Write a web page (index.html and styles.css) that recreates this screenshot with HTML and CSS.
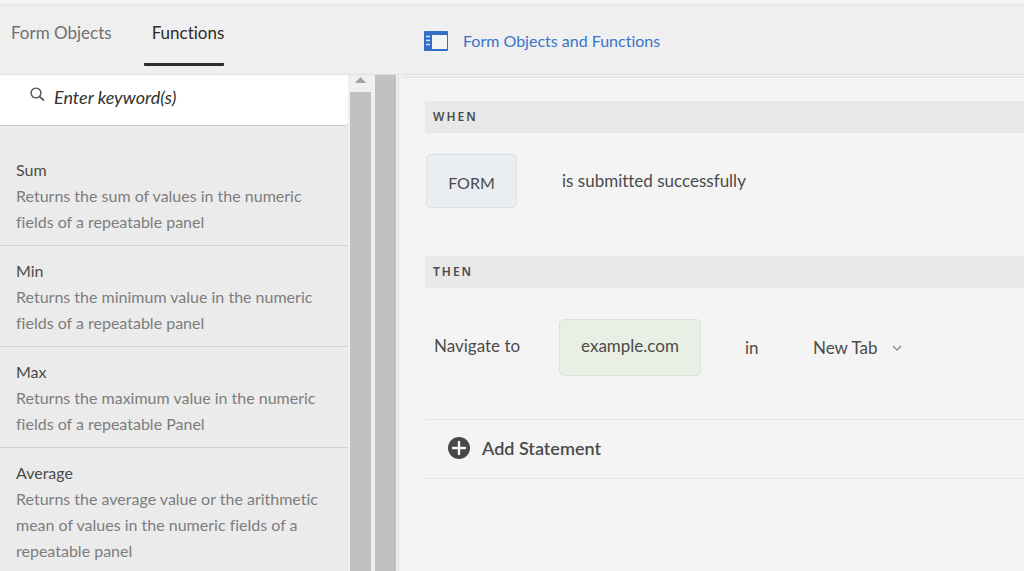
FILE: index.html
```html
<!DOCTYPE html>
<html lang="en">
<head>
<meta charset="utf-8">
<title>Rule Editor</title>
<link rel="stylesheet" href="styles.css">
</head>
<body>
<header class="topbar">
  <nav class="tabs" aria-label="Sidebar sections">
    <button class="tab" type="button">Form Objects</button>
    <button class="tab tab-active" type="button">Functions</button>
  </nav>
  <button class="panel-toggle" type="button">
    <svg width="24" height="20" viewBox="0 0 24 20" aria-hidden="true">
      <rect width="24" height="20" rx="1" fill="#326ec8"/>
      <rect x="8" y="4" width="15" height="14" fill="#f2f3f5"/>
      <path d="M2 5.5h4M2 9.5h4M2 13.5h4" stroke="#dce6f5" stroke-width="1.5"/>
    </svg>
    <span>Form Objects and Functions</span>
  </button>
</header>
<div class="workspace">
  <aside class="sidebar">
    <label class="search">
      <svg width="16" height="16" viewBox="0 0 16 16" fill="none" stroke="#505050" aria-hidden="true">
        <circle cx="6" cy="6" r="4.9" stroke-width="1.4"/>
        <path d="M9.7 9.7l4.3 4" stroke-width="1.7"/>
      </svg>
      <input class="search-input" type="text" placeholder="Enter keyword(s)" aria-label="Enter keyword(s)">
    </label>
    <ul class="functions">
      <li class="function"><h3 class="function-name">Sum</h3><p class="function-text">Returns the sum of values in the numeric<br>fields of a repeatable panel</p></li>
      <li class="function"><h3 class="function-name">Min</h3><p class="function-text">Returns the minimum value in the numeric<br>fields of a repeatable panel</p></li>
      <li class="function"><h3 class="function-name">Max</h3><p class="function-text">Returns the maximum value in the numeric<br>fields of a repeatable Panel</p></li>
      <li class="function"><h3 class="function-name">Average</h3><p class="function-text">Returns the average value or the arithmetic<br>mean of values in the numeric fields of a<br>repeatable panel</p></li>
    </ul>
  </aside>
  <div class="scroll-track" aria-hidden="true">
    <svg class="scroll-arrow" width="21" height="17" viewBox="0 0 21 17"><path d="M5 8l5.5-6L16 8z" fill="#a2a2a2"/></svg>
    <div class="scroll-thumb"></div>
  </div>
  <div class="outer-track" aria-hidden="true"><div class="scroll-thumb"></div></div>
  <main class="editor">
    <h2 class="section-title">WHEN</h2>
    <div class="condition">
      <button class="chip chip-form" type="button">FORM</button>
      <span>is submitted successfully</span>
    </div>
    <h2 class="section-title">THEN</h2>
    <div class="action">
      <span class="action-name">Navigate to</span>
      <button class="chip chip-url" type="button">example.com</button>
      <label class="action-in" for="target">in</label>
      <span class="target">
        <select id="target" class="target-select"><option>New Tab</option></select>
        <svg class="target-chevron" width="10" height="6" viewBox="0 0 10 6" fill="none" stroke="#939393" stroke-width="1.5" aria-hidden="true"><path d="M1 1l4 4 4-4"/></svg>
      </span>
    </div>
    <div class="add-row">
      <button class="add" type="button">
        <svg width="22" height="22" viewBox="0 0 22 22" aria-hidden="true">
          <circle cx="11" cy="11" r="11" fill="#484848"/>
          <path d="M11 5v12M5 11h12" stroke="#f5f5f5" stroke-width="2.4" stroke-linecap="round"/>
        </svg>
        <span>Add Statement</span>
      </button>
    </div>
  </main>
</div>
</body>
</html>
```
FILE: styles.css
```css
* { box-sizing: border-box; }
body {
  margin: 0;
  height: 100vh;
  display: flex;
  flex-direction: column;
  overflow: hidden;
  background: #f4f4f4;
  color: #4b4b4b;
  font: 17px/26px Lato, "Noto Sans", sans-serif;
  font-variant-ligatures: none;
}
button, input, select {
  font: inherit;
  font-variant-ligatures: none;
  color: inherit;
  background: none;
  border: 0;
  margin: 0;
  padding: 0;
}
h2, h3, p, ul { margin: 0; padding: 0; list-style: none; }
h3 { font-size: inherit; font-weight: 400; }
svg { display: block; flex: none; }

.topbar {
  flex: none;
  display: flex;
  margin-top: 4px;
  height: 71px;
  background: #efefef;
  border-top: 2px solid #e8e8e8;
  border-bottom: 1px solid #e0e0e0;
}
.tabs {
  display: flex;
  align-items: flex-start;
  gap: 32px;
  width: 424px;
  padding: 14px 0 0 11px;
}
.tab {
  height: 46px;
  padding-bottom: 17px;
  border-bottom: 3px solid transparent;
  color: #707070;
}
.tab-active {
  padding-left: 8px;
  border-color: #2c2c2c;
  border-radius: 1px;
  color: #2c2c2c;
}
.panel-toggle {
  display: flex;
  align-items: center;
  gap: 15px;
  padding-top: 1px;
  font-size: 16px;
  color: #3a73c9;
}

.workspace { flex: 1; min-height: 0; display: flex; }
.sidebar {
  flex: none;
  width: 348px;
  background: #ebebeb;
  overflow: hidden;
}
.search {
  display: flex;
  gap: 8px;
  height: 51px;
  padding: 9px 12px 0 30px;
  background: #fff;
  border-bottom: 1px solid #c8c8c8;
  border-bottom-right-radius: 4px;
}
.search svg { margin-top: 3px; }
.search-input { flex: 1; min-width: 0; height: 26px; outline: 0; font-size: 18px; }
.search-input::placeholder { color: #323232; font-style: italic; opacity: 1; }
.functions { padding-top: 19px; font-size: 16px; }
.function {
  padding: 12px 16px 10px;
  border-bottom: 1px solid #d0d0d0;
  white-space: nowrap;
}
.function-name { color: #4b4b4b; }
.function-text { color: #7d7d7d; }

.scroll-track, .outer-track {
  flex: none;
  display: flex;
  flex-direction: column;
  background: #f0f0f0;
}
.scroll-track { width: 27px; padding: 0 4px 0 2px; }
.outer-track { width: 24px; padding-right: 2px; border-right: 1px solid #dcdcdc; }
.scroll-thumb { flex: 1; background: #c1c1c1; }

.editor {
  flex: 1;
  min-width: 0;
  margin-left: 3px;
  margin-top: 1px;
  padding: 23px 0 0 23px;
  border-top: 2px solid #e8e8e8;
}
.section-title {
  height: 32px;
  padding-left: 8px;
  background: #e8e8e8;
  font-family: "Noto Sans", sans-serif;
  font-size: 12px;
  line-height: 32px;
  font-weight: 600;
  letter-spacing: 2px;
}
.condition {
  display: flex;
  align-items: center;
  gap: 45px;
  padding: 21px 0 48px 1px;
}
.chip { border: 1px solid; border-radius: 5px; }
.chip-form {
  width: 91px;
  height: 54px;
  padding-top: 3px;
  background: #eaeef3;
  border-color: #dae1e6;
  font-size: 16px;
}
.action {
  display: flex;
  align-items: center;
  padding: 31px 0 43px 9px;
}
.action-name { width: 125px; padding-bottom: 3px; }
.chip-url {
  width: 142px;
  height: 57px;
  padding-bottom: 3px;
  background: #e9efe5;
  border-color: #dce3d9;
}
.action-in { margin-left: 44px; width: 68px; }
.target { display: flex; align-items: center; gap: 13px; }
.target-select { appearance: none; }
.add-row {
  display: flex;
  align-items: center;
  height: 60px;
  padding: 0 0 2px 23px;
  border: 1px solid #e6e6e6;
  border-width: 1px 0;
}
.add { display: flex; align-items: center; gap: 12px; font-size: 18px; font-weight: 600; }
```
